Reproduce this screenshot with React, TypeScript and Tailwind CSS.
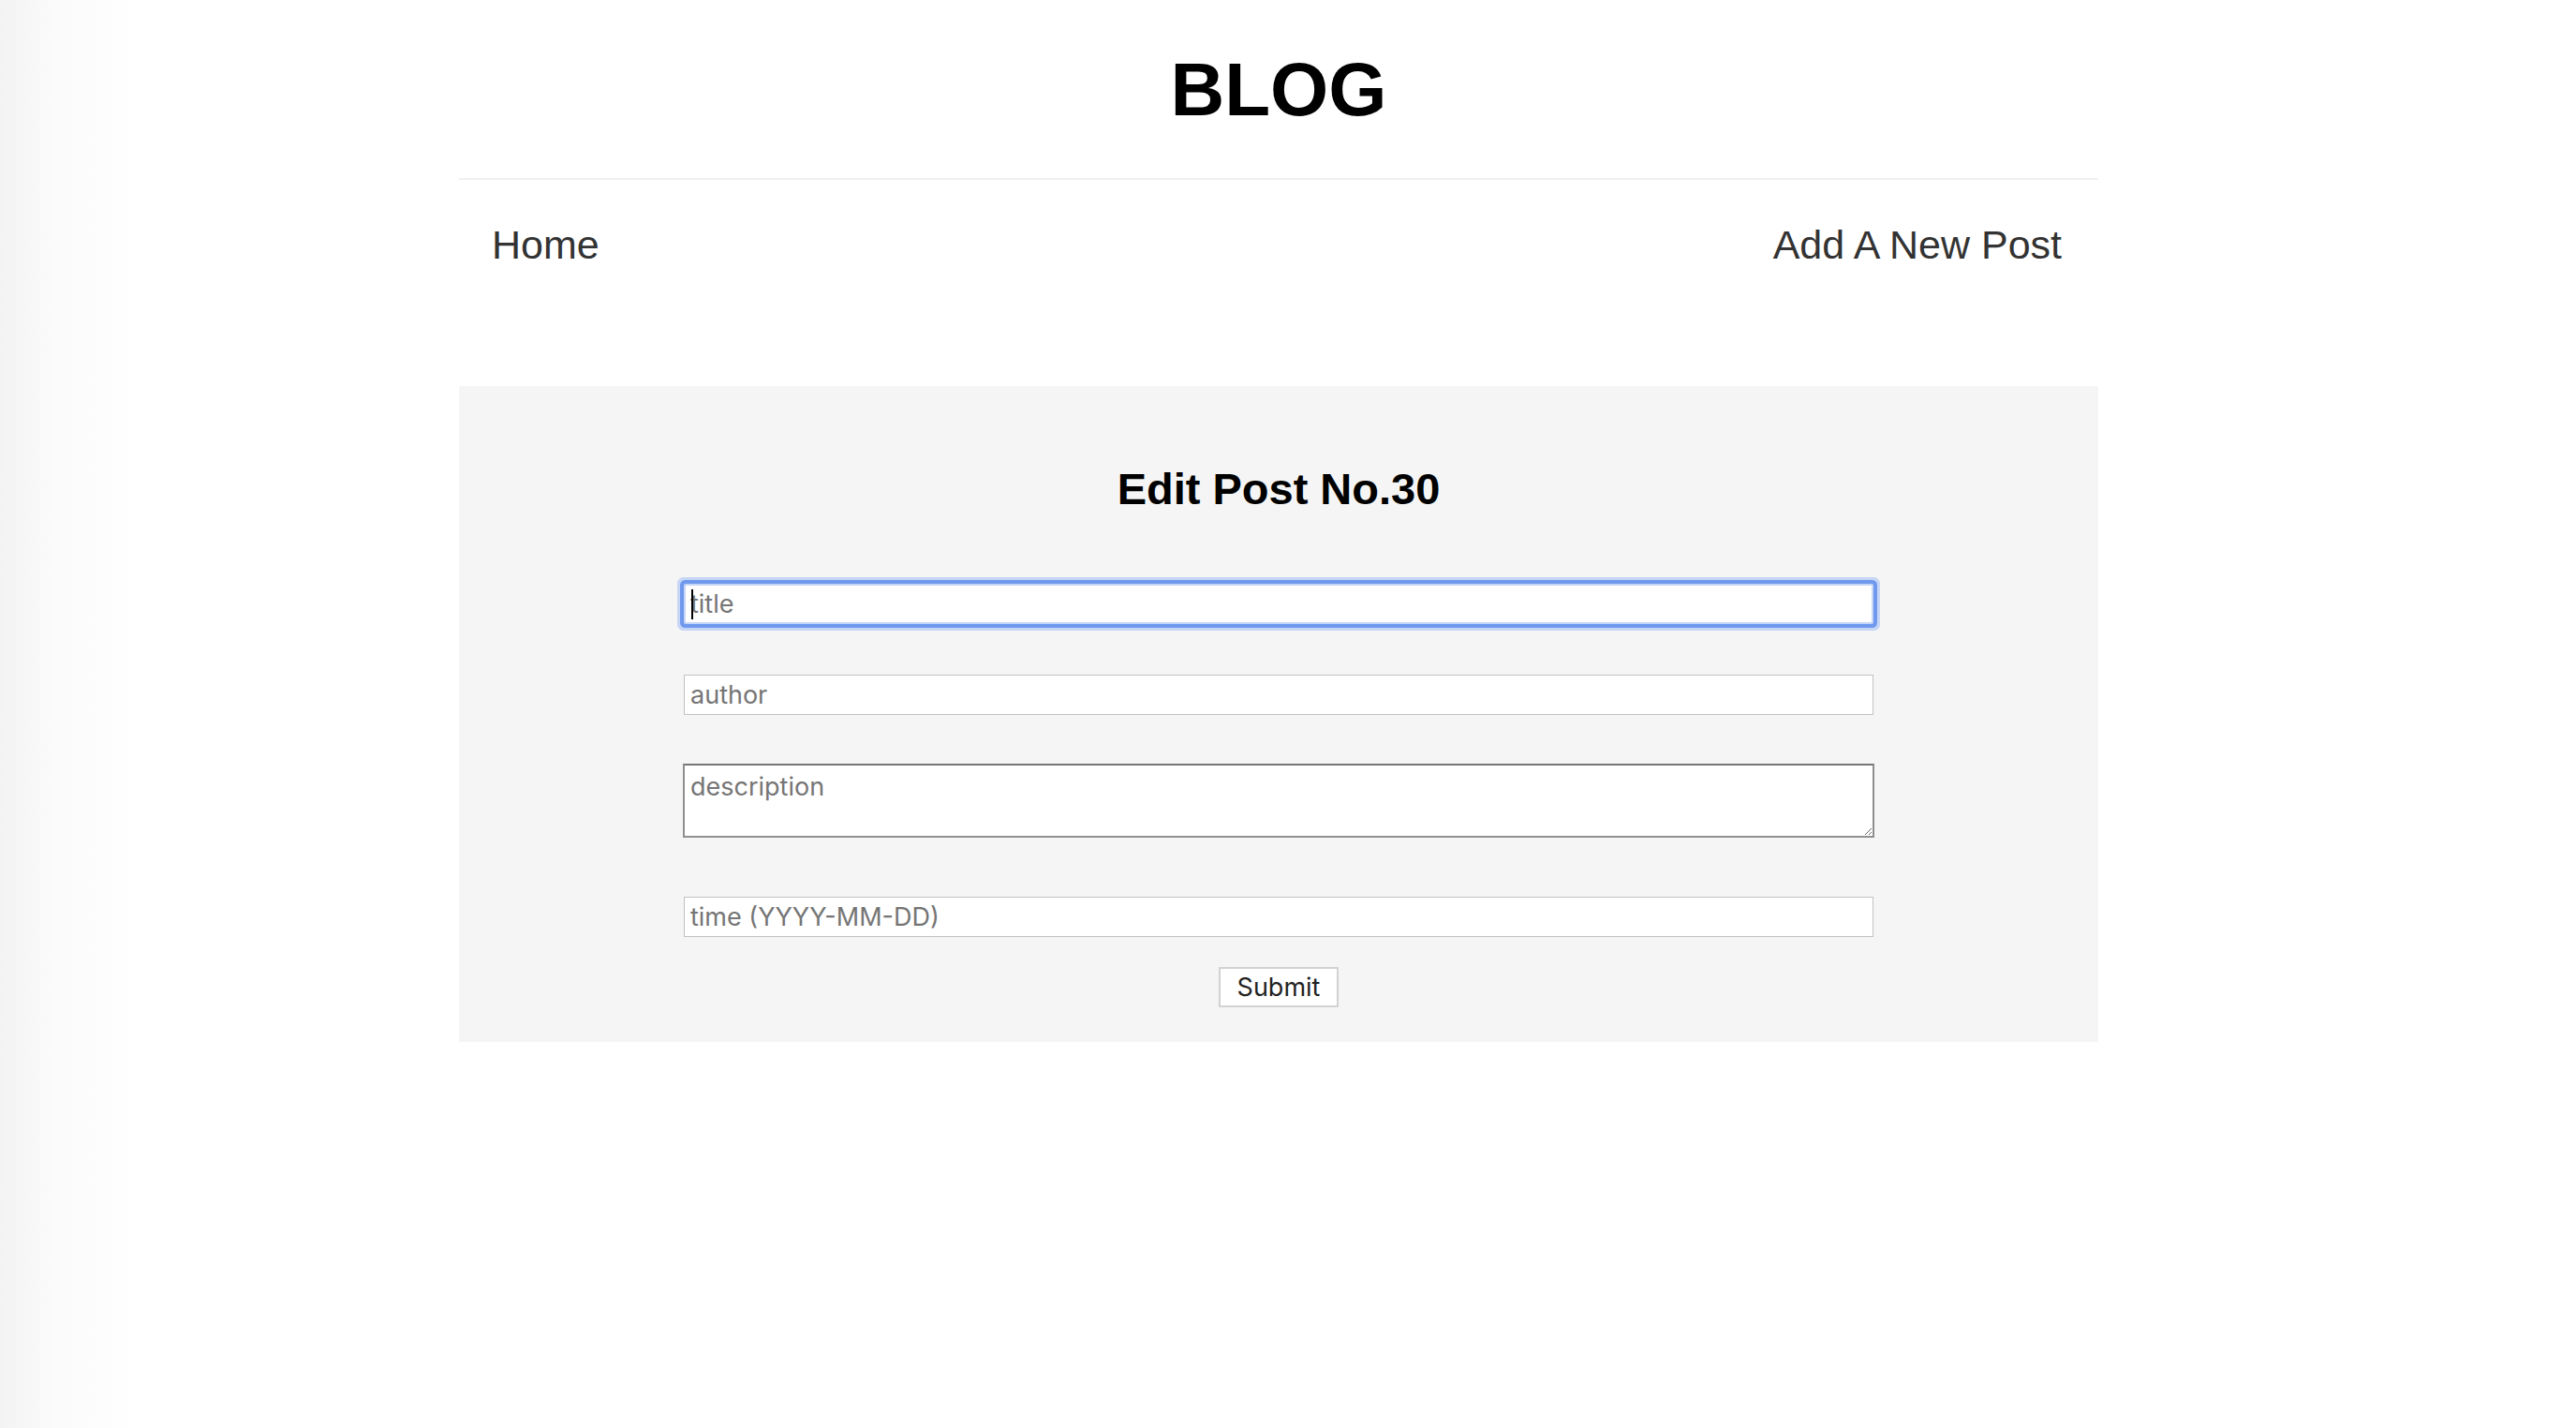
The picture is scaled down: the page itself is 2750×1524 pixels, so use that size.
import { useState } from 'react';

interface PostForm {
    title: string;
    author: string;
    description: string;
    time: string;
}

function NavBar() {
    return (
        <nav className="flex items-center justify-between pt-[44px] pl-[35px] pr-[39px]">
            <a className="text-[43px] leading-[50px] text-[#333333]">Home</a>
            <a className="text-[43px] leading-[50px] text-[#333333]">Add A New Post</a>
        </nav>
    );
}

export default function App() {
    const [form, setForm] = useState<PostForm>({ title: '', author: '', description: '', time: '' });

    const update = (key: keyof PostForm, value: string) => setForm((f) => ({ ...f, [key]: value }));

    return (
        <div className="min-h-screen w-full bg-[linear-gradient(to_right,#f3f3f3,#fbfbfb_60px,#ffffff_150px)] font-['Liberation_Sans',Arial,sans-serif]">
            <div className="ml-[490px] w-[1750px]">
                <header className="border-b-2 border-[#f0f0f0] pt-[48px] pb-[46px]">
                    <h1 className="text-center text-[80px] leading-[96px] font-bold text-black">BLOG</h1>
                </header>

                <NavBar />

                <section className="mt-[126px] bg-[#f5f5f5] pt-[82px] pb-[37px]">
                    <h2 className="text-center text-[47px] leading-[56px] font-bold text-black">Edit Post No.30</h2>

                    <form
                        className="mx-auto mt-[73px] flex w-[1270px] flex-col items-center font-['Inter','Liberation_Sans',sans-serif]"
                        onSubmit={(e) => e.preventDefault()}
                    >
                        <div className="relative w-full">
                            <input
                                value={form.title}
                                onChange={(e) => update('title', e.target.value)}
                                placeholder="title"
                                className="h-[43px] w-full rounded-[2px] border-2 border-[#c6d6f6] bg-white pl-[5px] text-[27px] text-black shadow-[0_0_0_4px_#7099ee,0_0_0_7px_#c6d6f6] outline-none placeholder:text-[#757575]"
                            />
                            <span className="absolute top-[6px] left-[8px] h-[32px] w-[2px] bg-black" />
                        </div>

                        <input
                            value={form.author}
                            onChange={(e) => update('author', e.target.value)}
                            placeholder="author"
                            className="mt-[54px] h-[43px] w-full border border-[#c2c2c2] bg-white pl-[6px] text-[27px] text-black outline-none placeholder:text-[#757575]"
                        />

                        <textarea
                            value={form.description}
                            onChange={(e) => update('description', e.target.value)}
                            placeholder="description"
                            className="mt-[52px] h-[79px] w-[1272px] border-2 border-[#8f8f8f] border-t-[#767676] bg-white px-[6px] pt-[8px] text-[27px] leading-[30px] text-black outline-none placeholder:text-[#757575]"
                        />

                        <input
                            value={form.time}
                            onChange={(e) => update('time', e.target.value)}
                            placeholder="time (YYYY-MM-DD)"
                            className="mt-[63px] h-[43px] w-full border border-[#c2c2c2] bg-white pl-[6px] text-[27px] text-black outline-none placeholder:text-[#757575]"
                        />

                        <button
                            type="submit"
                            className="mt-[32px] h-[43px] w-[128px] border-2 border-[#d2d2d2] bg-white text-[27px] text-[#222222]"
                        >
                            Submit
                        </button>
                    </form>
                </section>
            </div>
        </div>
    );
}
